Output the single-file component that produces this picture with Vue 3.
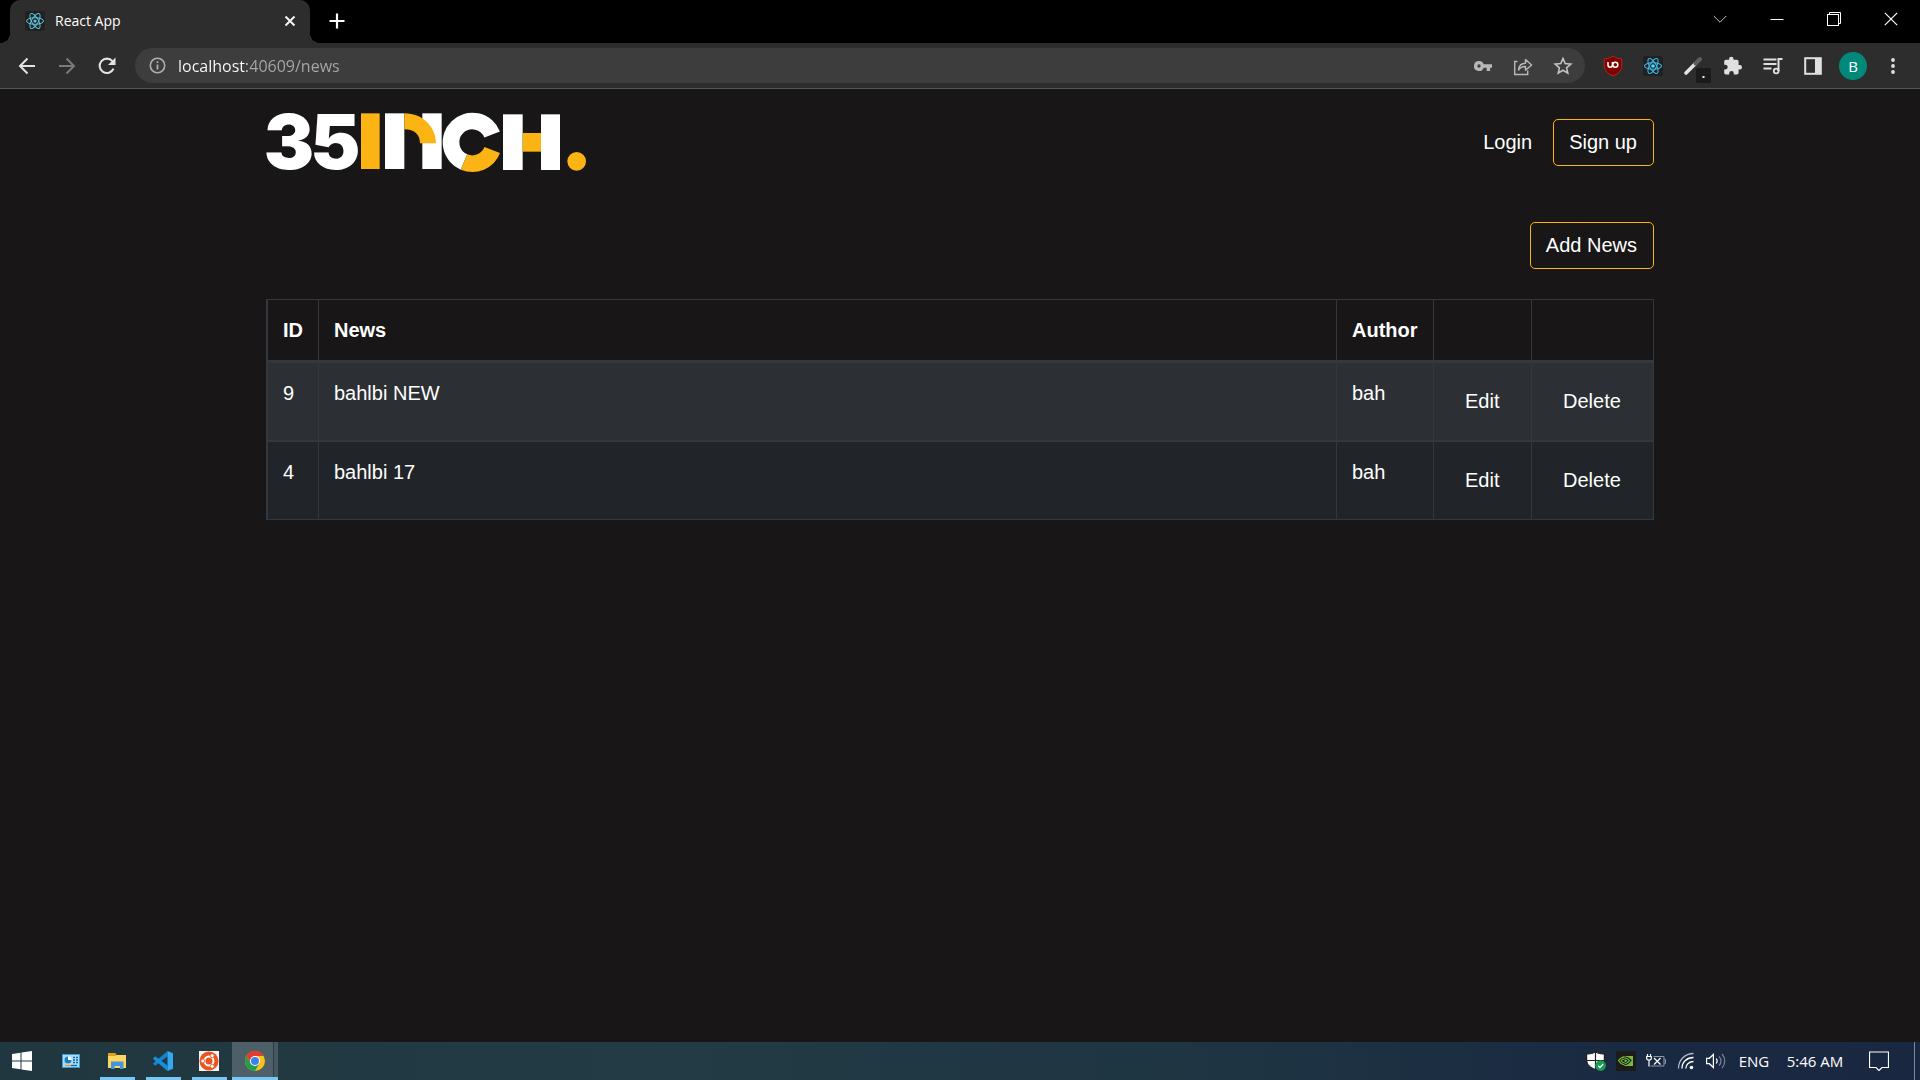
<script setup>
import { ref } from 'vue'

const address = ref('localhost:40609/news')
const news = ref([
  { id: 9, title: 'bahlbi NEW', author: 'bah' },
  { id: 4, title: 'bahlbi 17', author: 'bah' },
])
</script>

<template>
  <div class="screen">
    <header class="browser">
      <div class="tabstrip">
        <div class="tab">
          <svg class="favicon" viewBox="0 0 20 20" width="20" height="20" aria-hidden="true">
            <rect width="20" height="20" rx="2" fill="#212121" />
            <g fill="none" stroke="#5cc4e0" stroke-width="1">
              <ellipse cx="10" cy="10" rx="8.5" ry="3.3" />
              <ellipse cx="10" cy="10" rx="8.5" ry="3.3" transform="rotate(60 10 10)" />
              <ellipse cx="10" cy="10" rx="8.5" ry="3.3" transform="rotate(120 10 10)" />
            </g>
            <circle cx="10" cy="10" r="1.6" fill="#5cc4e0" />
          </svg>
          <span class="tab-title">React App</span>
          <button class="tab-close" aria-label="Close tab">
            <svg viewBox="0 0 12 12" width="12" height="12"><path d="M1.5 1.5l9 9M10.500 1.500l-9 9" stroke="#f4f4f4" stroke-width="2" /></svg>
          </button>
        </div>
        <button class="new-tab" aria-label="New tab">
          <svg viewBox="0 0 16 16" width="16" height="16"><path d="M8 .5v15M.5 8h15" stroke="#fff" stroke-width="2.2" /></svg>
        </button>
        <div class="window-controls">
          <button aria-label="Search tabs">
            <svg viewBox="0 0 14 14" width="14" height="14"><path d="M.8 4l6.200 6.200L13.200 4" fill="none" stroke="#c4c4c4" /></svg>
          </button>
          <button aria-label="Minimize">
            <svg viewBox="0 0 14 14" width="14" height="14"><path d="M.5 7.500h13" stroke="#fff" /></svg>
          </button>
          <button aria-label="Restore">
            <svg viewBox="0 0 14 14" width="14" height="14" fill="none" stroke="#fff"><rect x=".5" y="2.500" width="11" height="11" /><path d="M2.500 2.500v-2h11v11h-2" /></svg>
          </button>
          <button aria-label="Close window">
            <svg viewBox="0 0 14 14" width="14" height="14"><path d="M.8.8l12.400 12.400M13.200.8L.8 13.200" stroke="#fff" stroke-width="1.200" /></svg>
          </button>
        </div>
      </div>

      <div class="toolbar">
        <button class="tool" aria-label="Back">
          <svg viewBox="0 0 18 18" width="18" height="18" fill="none" stroke="#e2e2e2" stroke-width="2"><path d="M17 9H2M9.500 1.500L2 9l7.500 7.500" /></svg>
        </button>
        <button class="tool" aria-label="Forward" disabled>
          <svg viewBox="0 0 18 18" width="18" height="18" fill="none" stroke="#7a7a7a" stroke-width="2"><path d="M1 9h15M8.500 1.500L16 9l-7.500 7.500" /></svg>
        </button>
        <button class="tool" aria-label="Reload">
          <svg viewBox="0 0 18 18" width="18" height="18"><path d="M15.500 11.600A7.200 7.200 0 1 1 14.400 4.200" fill="none" stroke="#e2e2e2" stroke-width="2.100" /><path d="M17.500.5v7.500H10z" fill="#e2e2e2" /></svg>
        </button>
        <div class="omnibox">
          <svg class="info" viewBox="0 0 17 17" width="17" height="17" aria-hidden="true"><circle cx="8.500" cy="8.500" r="7.200" fill="none" stroke="#b0b0b4" stroke-width="1.600" /><path d="M8.500 7.500v5M8.500 4.200v1.900" stroke="#b0b0b4" stroke-width="1.800" /></svg>
          <input v-model="address" class="url" type="text" aria-label="Address and search bar" spellcheck="false" />
          <button class="tool" aria-label="Passwords">
            <svg viewBox="0 0 20 12" width="20" height="12"><path fill-rule="evenodd" fill="#b8b8b8" d="M6 1a5 5 0 1 0 4.700 6.700h3V11h3.400V7.700H19V4.300h-8.300A5 5 0 0 0 6 1zm0 3.300a1.700 1.700 0 1 1 0 3.400 1.700 1.700 0 0 1 0-3.400z" /></svg>
          </button>
          <button class="tool" aria-label="Share">
            <svg viewBox="0 0 20 20" width="20" height="20" fill="none" stroke="#b8b8b8" stroke-width="1.400"><path d="M4.500 5.500H1.700v13h13v-4" /><path d="M5.500 14c.5-4.500 3-6.800 7-6.800V3.500L18.600 9l-6.100 5.200v-3.700c-3.200 0-5.300 1-7 3.500z" stroke-linejoin="round" /></svg>
          </button>
          <button class="tool" aria-label="Bookmark">
            <svg viewBox="0 0 20 20" width="20" height="20"><path d="M10 2.500l2.200 5.100 5.600.5-4.200 3.700 1.200 5.400L10 14.300l-4.800 2.900 1.200-5.400-4.200-3.700 5.600-.5z" fill="none" stroke="#c2c2c2" stroke-width="1.600" /></svg>
          </button>
        </div>
        <div class="extensions">
          <button class="tool" aria-label="uBlock Origin">
            <svg viewBox="0 0 20 22" width="20" height="22"><path d="M10 1c3 2 5.500 2.800 8.800 2.800V11c0 5-4 7.800-8.800 10C5.200 18.800 1.200 16 1.200 11V3.800C4.500 3.800 7 3 10 1z" fill="#800000" stroke="#a32a2a" /><path d="M5 7v3a2.200 2.200 0 0 0 4.400 0V7" fill="none" stroke="#fff" stroke-width="1.500" /><circle cx="12.300" cy="9.800" r="2.500" fill="none" stroke="#fff" stroke-width="1.500" /></svg>
          </button>
          <button class="tool" aria-label="React Developer Tools">
            <svg viewBox="0 0 20 20" width="20" height="20">
              <rect width="20" height="20" rx="2" fill="#212121" />
              <g fill="none" stroke="#40b8e8" stroke-width="1.100">
                <ellipse cx="10" cy="10" rx="8.500" ry="3.300" />
                <ellipse cx="10" cy="10" rx="8.500" ry="3.300" transform="rotate(60 10 10)" />
                <ellipse cx="10" cy="10" rx="8.500" ry="3.300" transform="rotate(120 10 10)" />
              </g>
              <circle cx="10" cy="10" r="1.800" fill="#61dafb" />
            </svg>
          </button>
          <button class="tool dropper" aria-label="Color picker">
            <svg viewBox="0 0 20 20" width="20" height="20"><path d="M3 17L12.500 7.500" stroke="#e4e4e4" stroke-width="3.600" stroke-linecap="round" /><path d="M11 4.500l5 5" stroke="#303030" stroke-width="2" /><path d="M12.500 7.500l4.500-4.500" stroke="#5e5e5e" stroke-width="4" stroke-linecap="round" /></svg>
            <span class="badge">.</span>
          </button>
          <button class="tool" aria-label="Extensions">
            <svg viewBox="0 0 20 20" width="20" height="20"><path fill="#e0e0e0" d="M16.800 9H15.600V5.600a1.800 1.800 0 0 0-1.800-1.800H10.500V3a2.200 2.200 0 0 0-4.400 0v.8H3A1.800 1.800 0 0 0 1.200 5.600v3.100h1.100a2.400 2.400 0 0 1 0 4.800H1.200v3.200A1.800 1.800 0 0 0 3 18.500h3.200v-1.200a2.300 2.300 0 0 1 4.600 0v1.200h3a1.800 1.800 0 0 0 1.800-1.800v-3.300h1.200a2.200 2.200 0 0 0 0-4.400z" /></svg>
          </button>
          <button class="tool" aria-label="Media controls">
            <svg viewBox="0 0 20 18" width="20" height="18" fill="none" stroke="#e0e0e0" stroke-width="1.800"><path d="M.5 2.500h13M.5 7h13M.5 11.500h8" /><path d="M15.500 14V2H19.500" stroke-width="2" /><circle cx="13.200" cy="14" r="2.400" /></svg>
          </button>
          <button class="tool" aria-label="Side panel">
            <svg viewBox="0 0 18 18" width="18" height="18"><rect x="1.200" y="1.200" width="15.600" height="15.600" fill="none" stroke="#e0e0e0" stroke-width="2" /><path d="M11 1h6v16h-6z" fill="#e0e0e0" /></svg>
          </button>
          <button class="tool" aria-label="Profile"><span class="avatar">B</span></button>
          <button class="tool" aria-label="Menu">
            <svg viewBox="0 0 4 18" width="4" height="18" fill="#e0e0e0"><circle cx="2" cy="3" r="1.900" /><circle cx="2" cy="9" r="1.900" /><circle cx="2" cy="15" r="1.900" /></svg>
          </button>
        </div>
      </div>
    </header>

    <main class="page">
      <div class="container">
        <nav class="navbar">
          <a class="brand" href="#" aria-label="35inch.">
            <svg viewBox="24 -12 972 276" width="324" height="92">
              <g class="digits" fill="#fff">
                <text x="26" y="206">3</text>
                <text x="166" y="206">5</text>
              </g>
              <rect x="318" y="40" width="56" height="167" fill="#fbb413" />
              <rect x="390" y="40" width="58" height="167" fill="#fff" />
              <rect x="502" y="40" width="58" height="167" fill="#fff" />
              <path d="M448 40C506 40 543 84 543 130H495C495 100 474 88 448 88Z" fill="#fbb413" />
              <path d="M627 186A64 64 0 1 1 711.500 103.500" fill="none" stroke="#fff" stroke-width="50" />
              <path d="M711.700 150A64 64 0 0 1 627 186" fill="none" stroke="#fbb413" stroke-width="50" />
              <rect x="744" y="43" width="59" height="167" fill="#fff" />
              <rect x="858" y="43" width="57" height="167" fill="#fff" />
              <rect x="803" y="99" width="55" height="56" fill="#fbb413" />
              <circle cx="965" cy="184" r="28" fill="#fbb413" />
            </svg>
          </a>
          <a class="login" href="#">Login</a>
          <button class="btn outlined">Sign up</button>
        </nav>

        <div class="actions">
          <button class="btn outlined">Add News</button>
        </div>

        <table class="news">
          <colgroup>
            <col class="col-id" /><col /><col class="col-author" /><col class="col-edit" /><col class="col-delete" />
          </colgroup>
          <thead>
            <tr>
              <th scope="col">ID</th>
              <th scope="col">News</th>
              <th scope="col">Author</th>
              <th></th>
              <th></th>
            </tr>
          </thead>
          <tbody>
            <tr v-for="item in news" :key="item.id">
              <td>{{ item.id }}</td>
              <td>{{ item.title }}</td>
              <td>{{ item.author }}</td>
              <td><button class="btn">Edit</button></td>
              <td><button class="btn">Delete</button></td>
            </tr>
          </tbody>
        </table>
      </div>
    </main>

    <footer class="taskbar">
      <button class="start" aria-label="Start">
        <svg viewBox="0 0 20 20" width="20" height="20" fill="#fff"><path d="M0 3l8.500-1.200v7.700H0zM9.500 1.600L20 0v9.500H9.500zM0 10.500h8.500v7.700L0 17zM9.500 10.500H20V20L9.500 18.400z" /></svg>
      </button>
      <button class="task" aria-label="Control Panel">
        <svg viewBox="0 0 18 14" width="18" height="14"><rect width="18" height="14" fill="#3f9bd6" /><rect x="1" y="1" width="16" height="12" fill="#a9dcf7" /><circle cx="6" cy="6" r="3.600" fill="#fff" /><path d="M6 6V2.400A3.600 3.600 0 1 0 9.600 6z" fill="#1b7fc4" /><path d="M11 3.500h2m1 0h2M11 6h2m1 0h2M11 8.500h2m1 0h2" stroke="#1565a5" stroke-width="1.300" /><path d="M3 11.500h6" stroke="#f19a1c" stroke-width="1.300" /><path d="M9 11.500h6" stroke="#1565a5" stroke-width="1.300" /></svg>
      </button>
      <button class="task open" aria-label="File Explorer">
        <svg viewBox="0 0 18 16" width="18" height="16"><path d="M0 0h7l1.500 2H18v13H0z" fill="#ffd562" /><path d="M0 0h7l1.500 3H0z" fill="#dfa11b" /><path d="M3 8.500h12.500V16H12v-3H6.500v3H3z" fill="#3f96dc" /></svg>
      </button>
      <button class="task open" aria-label="Visual Studio Code">
        <svg viewBox="0 0 20 20" width="20" height="20"><path d="M14.500 0v5.500L2.200 14.700.4 13.300v-1.200z" fill="#1a80c4" /><path d="M.4 6.900l1.800-1.600 12.300 9.200V20L.4 8.100z" fill="#1590dc" /><path d="M14.500 0L20 2.300v15.400L14.500 20z" fill="#30a8f2" /></svg>
      </button>
      <button class="task open" aria-label="Ubuntu">
        <svg viewBox="0 0 20 20" width="20" height="20"><rect width="20" height="20" fill="#f4f4f4" /><circle cx="10" cy="10" r="9.500" fill="#e95420" /><circle cx="10" cy="10" r="4.500" fill="none" stroke="#fff" stroke-width="2" /><g fill="#fff" stroke="#e95420" stroke-width=".8"><circle cx="3.800" cy="10" r="2" /><circle cx="13.200" cy="4.700" r="2" /><circle cx="13.200" cy="15.300" r="2" /></g></svg>
      </button>
      <button class="task active" aria-label="Google Chrome">
        <svg viewBox="0 0 20 20" width="20" height="20"><circle cx="10" cy="10" r="10" fill="#fbc116" /><path d="M10 5h8.660A10 10 0 0 0 1.340 5L5.700 12.500z" fill="#e33b2e" /><path d="M1.340 5A10 10 0 0 0 10 20l4.330-7.500L10 14 5.700 12.500z" fill="#21a04b" /><circle cx="10" cy="10" r="5" fill="#fff" /><circle cx="10" cy="10" r="4" fill="#3b7ff0" /></svg>
      </button>

      <div class="tray">
        <button class="tray-item" aria-label="Windows Security">
          <svg viewBox="0 0 20 20" width="20" height="20"><path d="M9.500.8C12 2.600 15 3 18.300 3v6c0 4.500-3.500 7.500-8.800 9.500C4.200 16.500.7 13.500.7 9V3C4 3 7 2.600 9.500.8z" fill="#fff" stroke="#111" /><path d="M9.500 1v17M1 9.500h17.500" stroke="#222" stroke-width="1.200" /><circle cx="14.600" cy="14.600" r="5.300" fill="#189a50" /><path d="M12.200 14.700l1.800 1.800 3.200-3.500" fill="none" stroke="#fff" stroke-width="1.300" /></svg>
        </button>
        <button class="tray-item" aria-label="NVIDIA settings">
          <svg viewBox="0 0 20 20" width="20" height="20"><rect width="20" height="20" fill="#1b1c1a" /><path d="M8.500 5h8.500v10H8.500z" fill="#76b93f" /><path d="M2.500 9.500C5 6.500 7 5.800 9.500 6c2.500.2 4 1.800 5.500 3.500-1.800 2.500-3.500 4-6 4-3 0-5-1.500-6.500-4z" fill="none" stroke="#1b1c1a" stroke-width="1.200" /><path d="M8.500 5.800C6 6 4 7.500 2.500 9.500c1.500 2.500 3.500 4 6 4.300" fill="none" stroke="#76b93f" stroke-width="1.200" /><path d="M8.500 8C7 8 6 8.700 5 9.700c.8 1.300 2 2 3.500 2" fill="none" stroke="#76b93f" stroke-width="1.100" /><path d="M8.500 8c1.700 0 2.800.7 3.500 1.500-1 1.500-2 2.200-3.500 2.200" fill="none" stroke="#1b1c1a" stroke-width="1.100" /></svg>
        </button>
        <button class="tray-item" aria-label="Battery">
          <svg viewBox="0 0 20 14" width="20" height="14" fill="none"><path d="M7.500 2.500h10.500v9.500H4.500M18.500 5.500h1v4h-1" stroke="#8d98a8" /><path d="M8 4l6.500 6.500M14.500 4L8 10.500" stroke="#fff" stroke-width="1.200" /><path d="M1.500 0v2M4.500 0v2M.7 2.500h4.600v2c0 2-4.600 2-4.600 0zM3 6v6.500" stroke="#fff" stroke-width="1.200" /></svg>
        </button>
        <button class="tray-item" aria-label="Network">
          <svg viewBox="0 0 18 18" width="18" height="18" fill="none" stroke-width="1.300"><path d="M1.500 16.500C1.500 8 8 1.500 16.500 1.500" stroke="#aeb7c3" /><path d="M5 16.500C5 10 10 5.500 16.500 5.500M8.800 16.500c0-4 3.500-7 7.700-7" stroke="#fff" /><circle cx="14.500" cy="15.500" r="1.800" fill="#fff" /></svg>
        </button>
        <button class="tray-item" aria-label="Volume">
          <svg viewBox="0 0 20 18" width="20" height="18" fill="none" stroke="#fff" stroke-width="1.200"><path d="M.6 6.300h2.800L7.400 2.500v13L3.400 11.700H.6zM10.200 6.500c1.200 1.500 1.200 3.500 0 5" /><path d="M13 4.300c2.400 2.800 2.400 6.600 0 9.400M16 2c3.600 4 3.600 10 0 14" stroke="#76839a" /></svg>
        </button>
        <button class="lang">ENG</button>
        <button class="clock">5:46 AM</button>
        <button class="notifications" aria-label="Notifications">
          <svg viewBox="0 0 20 20" width="20" height="20"><path d="M.5 1h19v15.500H13l-3 3-3-3H.5z" fill="none" stroke="#fff" stroke-width="1.200" /></svg>
        </button>
        <button class="desktop" aria-label="Show desktop"></button>
      </div>
    </footer>
  </div>
</template>

<style>
body {
  margin: 0;
  background: #181617;
}
</style>

<style scoped>
* {
  box-sizing: border-box;
}

button {
  margin: 0;
  padding: 0;
  border: 0;
  background: none;
  color: inherit;
  font: inherit;
}

svg {
  display: block;
  flex: none;
}

.screen {
  display: flex;
  flex-direction: column;
  min-height: 100vh;
  color: #fff;
  font-family: "Liberation Sans", Arial, sans-serif;
  font-size: 20px;
  line-height: 30px;
}

.browser,
.taskbar {
  font-family: "Open Sans", "Noto Sans", sans-serif;
}

/* Tab strip */
.tabstrip {
  display: flex;
  height: 43px;
  padding: 0 1px 0 10px;
  background: #000;
}

.tab {
  position: relative;
  display: flex;
  align-items: center;
  width: 300px;
  padding: 0 14px 2px 15px;
  border-radius: 10px 10px 0 0;
  background: #2d2d2d;
}

.tab::before,
.tab::after {
  content: "";
  position: absolute;
  bottom: 0;
  width: 10px;
  height: 10px;
}

.tab::before {
  right: 100%;
  background: radial-gradient(circle at 0 0, #000 10px, #2d2d2d 10px);
}

.tab::after {
  left: 100%;
  background: radial-gradient(circle at 100% 0, #000 10px, #2d2d2d 10px);
}

.tab-title {
  flex: 1;
  margin-left: 10px;
  font-size: 14px;
  line-height: 20px;
}

.new-tab {
  display: flex;
  align-items: center;
  padding: 0 19px 1px;
}

.window-controls {
  display: flex;
  height: 37px;
  margin-left: auto;
}

.window-controls button {
  display: flex;
  align-items: center;
  justify-content: center;
  width: 57px;
}

/* Toolbar */
.toolbar {
  display: flex;
  align-items: center;
  height: 46px;
  padding: 0 7px;
  border-bottom: 1px solid #555;
  background: #2d2d2d;
}

.tool {
  position: relative;
  display: flex;
  align-items: center;
  justify-content: center;
  flex: none;
  width: 40px;
  height: 35px;
}

.omnibox {
  display: flex;
  align-items: center;
  flex: 1;
  height: 35px;
  margin: 0 8px;
  padding: 0 2px 0 14px;
  border-radius: 18px;
  background: #3d3d3d;
}

.url {
  flex: 1;
  min-width: 0;
  margin-left: 12px;
  padding: 0;
  border: 0;
  outline: 0;
  background: linear-gradient(90deg, #fff 69px, #a8a8a8 69px);
  background-clip: text;
  color: transparent;
  font-family: inherit;
  font-size: 16px;
  line-height: 30px;
}

.extensions {
  display: flex;
}

.badge {
  position: absolute;
  right: 2px;
  bottom: 0;
  width: 15px;
  height: 15px;
  border-radius: 2px;
  background: #1b1b1b;
  font-size: 12px;
  font-weight: 700;
  line-height: 12px;
  text-align: center;
}

.avatar {
  width: 28px;
  height: 28px;
  border-radius: 50%;
  background: #00897b;
  font-size: 15px;
  line-height: 28px;
  text-align: center;
}

/* Page */
.page {
  flex: 1;
  background: #181617;
}

.container {
  max-width: 1388px;
  margin: 0 auto;
}

.navbar {
  display: flex;
  align-items: center;
  padding: 7px 0 8px;
}

.brand {
  margin-right: auto;
  margin-left: -3px;
}

.digits {
  font-family: Inter, sans-serif;
  font-size: 226px;
  font-weight: 900;
}

.login {
  margin-right: 21px;
  color: #fff;
  text-decoration: none;
}

.btn {
  display: block;
  padding: 8px 15px;
  border: 1px solid transparent;
  border-radius: 5px;
  line-height: 29px;
}

.outlined {
  padding-right: 16px;
  border-color: #fbb413;
}

.actions {
  display: flex;
  justify-content: flex-end;
  padding: 26px 0 30px;
}

.news {
  width: 100%;
  border: solid #32383e;
  border-width: 1px 0 0 2px;
  border-spacing: 0;
  table-layout: fixed;
}

.col-id { width: 51px; }
.col-author { width: 97px; }
.col-edit { width: 98px; }
.col-delete { width: 122px; }

.news th,
.news td {
  padding: 15px 0 15px 15px;
  border: solid #32383e;
  border-width: 0 1px 2px 0;
  text-align: left;
  vertical-align: top;
}

.news th {
  border-bottom-width: 3px;
}

.news tbody tr {
  background: #212529;
}

.news tbody tr:nth-child(odd) {
  background: #2c3034;
}

.news tbody tr:last-child td {
  border-bottom-width: 1px;
}

/* Taskbar */
.taskbar {
  display: flex;
  height: 38px;
  background: linear-gradient(90deg, #213740 0%, #223b44 35%, #1e3442 65%, #1a2942 85%, #1a2740 100%);
  font-size: 15px;
}

.start {
  display: flex;
  align-items: center;
  width: 48px;
  padding-left: 12px;
}

.task {
  position: relative;
  display: flex;
  align-items: center;
  justify-content: center;
  width: 46px;
}

.open::after,
.active::after {
  content: "";
  position: absolute;
  right: 5px;
  bottom: 0;
  left: 6px;
  height: 3px;
  background: #76c9f7;
}

.active {
  background: linear-gradient(90deg, #4d5f67 41px, #2b3c44 41px, #2b3c44 42px, #46575f 42px);
}

.active::after {
  right: 0;
  left: 0;
}

.tray {
  display: flex;
  margin-left: auto;
}

.tray-item {
  display: flex;
  align-items: center;
  justify-content: center;
  width: 30px;
}

.lang {
  width: 46px;
}

.clock {
  width: 76px;
}

.notifications {
  display: flex;
  align-items: center;
  justify-content: center;
  width: 52px;
  margin-right: 9px;
}

.desktop {
  width: 6px;
  border-left: 1px solid #7d8797;
}
</style>
